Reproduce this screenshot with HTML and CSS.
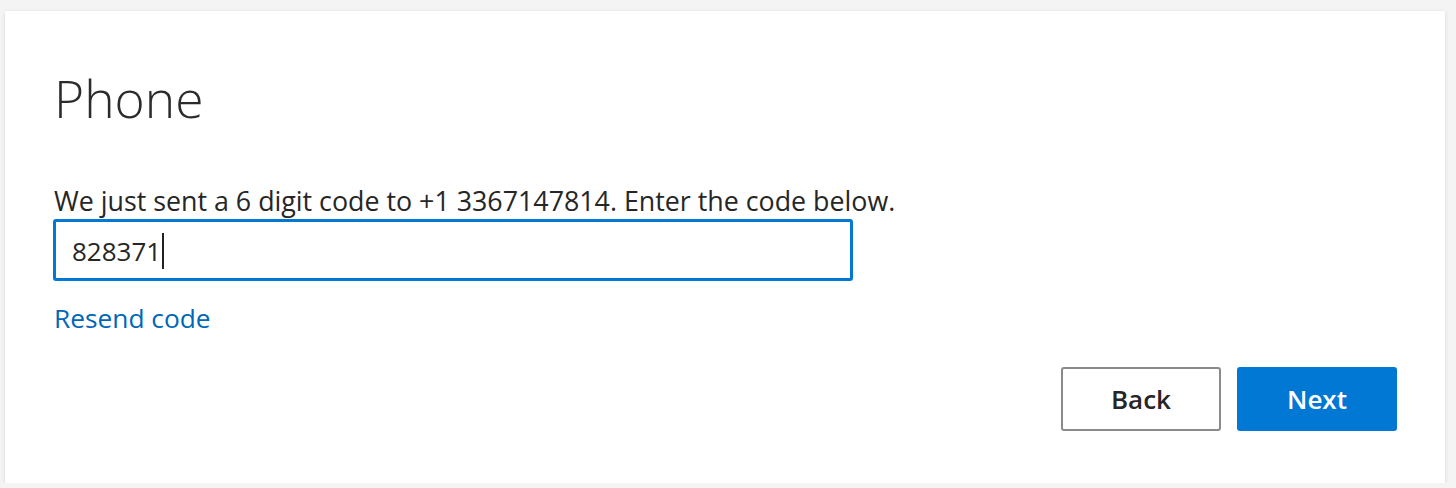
FILE: index.html
```html
<!DOCTYPE html>
<html lang="en">
<head>
<meta charset="utf-8">
<title>Phone</title>
<link rel="stylesheet" href="styles.css">
</head>
<body>
<main class="card">
  <h1 class="title">Phone</h1>
  <p class="prompt">We just sent a 6 digit code to +1 3367147814. Enter the code below.</p>
  <div class="input"><span class="value">828371</span><span class="caret"></span></div>
  <a class="link" href="#">Resend code</a>
  <div class="actions">
    <button class="btn btn-back" type="button">Back</button>
    <button class="btn btn-next" type="button">Next</button>
  </div>
</main>
</body>
</html>
```

FILE: styles.css
```css
html, body {
  margin: 0;
  padding: 0;
  background: #f4f4f4;
  font-family: "Open Sans", "Noto Sans", sans-serif;
  color: #262626;
}
body {
  padding: 11px 11px 0 5px;
}
.card {
  box-sizing: border-box;
  width: 1440px;
  height: 472px;
  background: #fff;
  box-shadow: 0 1px 4px rgba(0,0,0,0.12);
  padding: 52px 48px 0 49px;
  display: flex;
  flex-direction: column;
}
.title {
  margin: 0;
  font-weight: 300;
  font-size: 51.5px;
  line-height: 70px;
  color: #2b2b2b;
}
.prompt {
  margin: 53px 0 0;
  font-size: 26.8px;
  line-height: 30px;
  white-space: nowrap;
}
.input {
  box-sizing: border-box;
  width: 800px;
  height: 62px;
  margin-top: 3px;
  margin-left: -1px;
  border: 3px solid #0078d4;
  border-radius: 3px;
  display: flex;
  align-items: center;
  padding: 2px 0 0 16px;
  font-size: 26px;
}
.caret {
  display: inline-block;
  width: 2px;
  height: 36px;
  background: #222;
  margin-left: 1px;
  margin-top: -1px;
}
.link {
  margin-top: 20px;
  font-size: 26.3px;
  line-height: 34px;
  color: #0067b8;
  text-decoration: none;
  align-self: flex-start;
}
.actions {
  display: flex;
  justify-content: flex-end;
  gap: 16px;
  margin-top: 32px;
}
.btn {
  box-sizing: border-box;
  width: 160px;
  height: 64px;
  border-radius: 3px;
  font-family: inherit;
  font-size: 26px;
  font-weight: 600;
  cursor: pointer;
  padding: 0;
}
.btn-back {
  background: #fff;
  border: 2px solid #8a8a8a;
  color: #262626;
}
.btn-next {
  background: #0078d4;
  border: none;
  color: #fff;
}
```
